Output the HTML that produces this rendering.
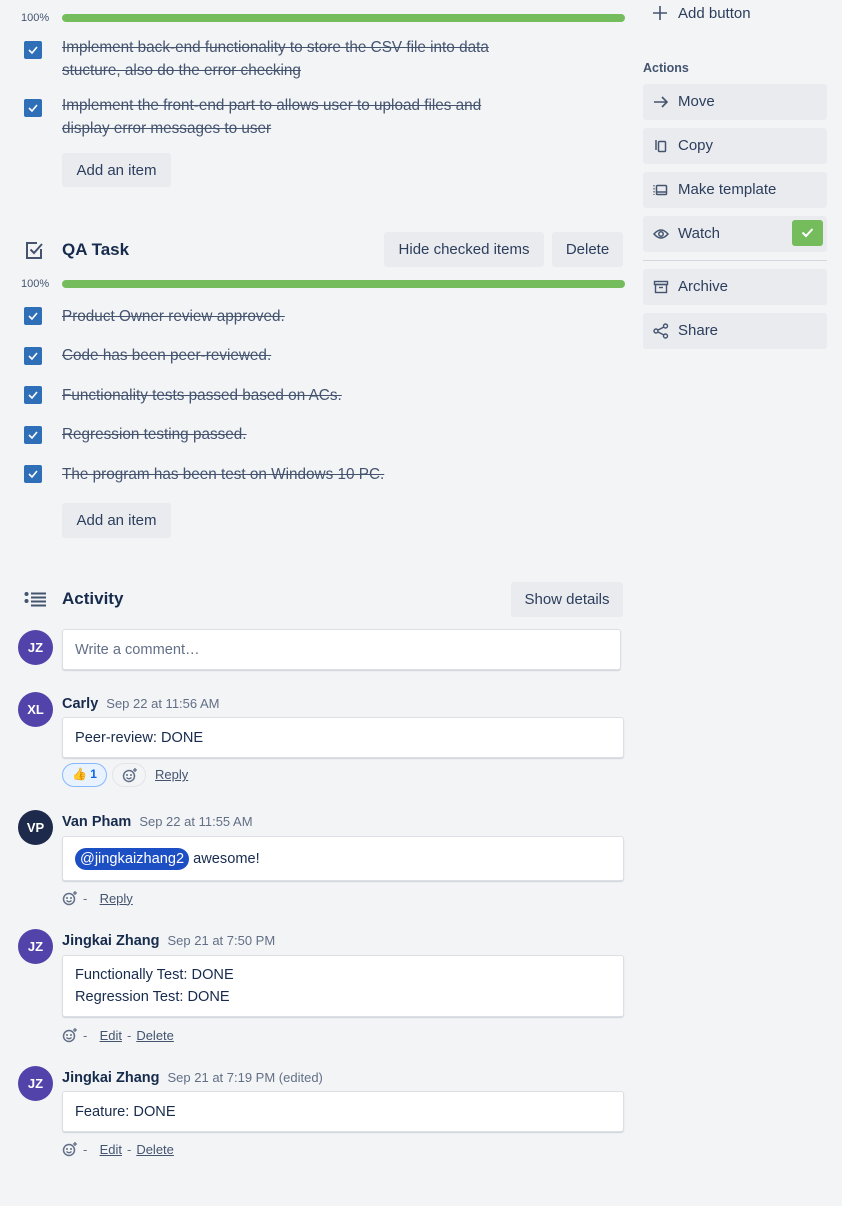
<!DOCTYPE html>
<html><head><meta charset="utf-8"><style>
*{box-sizing:border-box;margin:0;padding:0}
body{width:842px;height:1206px;background:#f3f4f6;font-family:"Liberation Sans",sans-serif;color:#172b4d;position:relative;overflow:hidden;font-size:14px}
.a{position:absolute}
.btn{position:absolute;background:#e9ebee;border-radius:3px;color:#2c3e5d;font-size:15px;display:flex;align-items:center;justify-content:center}
.pct{position:absolute;left:21px;font-size:11px;color:#44546f}
.bar{position:absolute;left:62px;width:563px;height:8px;border-radius:4px;background:#74bc5c}
.cb{position:absolute;left:24px;width:18px;height:18px;background:#2f6fb8;border-radius:2px}
.cb svg{position:absolute;left:4px;top:5px}
.it{position:absolute;left:62px;color:#44546f;text-decoration:line-through;font-size:15.3px;line-height:23px}
.side{position:absolute;left:643px;width:184px;height:36px;background:#e9ebee;border-radius:3px;font-size:15px;color:#2c3e5d;padding-left:35px;line-height:36px}
.side svg{position:absolute;left:10px;top:10px}
.av{position:absolute;left:18px;width:35px;height:35px;border-radius:50%;background:#5243aa;color:#fff;font-weight:bold;font-size:13px;display:flex;align-items:center;justify-content:center}
.nm{position:absolute;left:62px;font-weight:bold;font-size:14.5px}
.nm span{font-weight:normal;font-size:13px;color:#626f86;margin-left:8px}
.box{position:absolute;left:62px;width:562px;background:#fff;border:1px solid #dcdfe4;border-radius:3px;box-shadow:0 1px 1px rgba(9,30,66,.15);padding-left:12px;font-size:14.6px;color:#172b4d;line-height:22px}
.act{position:absolute;left:62px;font-size:13px;color:#626f86;display:flex;align-items:center;gap:5px}
.act u{color:#44546f}
h3{position:absolute;left:62px;font-size:17px;font-weight:bold;color:#172b4d}
</style></head><body>

<div class="btn" style="left:385px;top:-10px;width:158px;height:10px"></div>
<div class="btn" style="left:553px;top:-10px;width:70px;height:10px"></div>

<div class="pct" style="top:12px">100%</div>
<div class="bar" style="top:14px"></div>
<div class="cb" style="top:41px"><svg width="10" height="8" viewBox="0 0 10 8"><path d="M1 4l3 3 5-6" stroke="#fff" stroke-width="1.6" fill="none"/></svg></div>
<div class="it" style="top:36px">Implement back-end functionality to store the CSV file into data<br>stucture, also do the error checking</div>
<div class="cb" style="top:99px"><svg width="10" height="8" viewBox="0 0 10 8"><path d="M1 4l3 3 5-6" stroke="#fff" stroke-width="1.6" fill="none"/></svg></div>
<div class="it" style="top:94px">Implement the front-end part to allows user to upload files and<br>display error messages to user</div>
<div class="btn" style="left:62px;top:153px;width:109px;height:34px">Add an item</div>

<svg class="a" style="left:25px;top:241px" width="19" height="19" viewBox="0 0 19 19"><path d="M16 8v9H2V2h10" stroke="#44546f" stroke-width="2" fill="none"/><path d="M5.5 8.5l3.5 3.5 8-9" stroke="#44546f" stroke-width="2" fill="none"/></svg>
<h3 style="top:240px">QA Task</h3>
<div class="btn" style="left:384px;top:232px;width:160px;height:35px">Hide checked items</div>
<div class="btn" style="left:552px;top:232px;width:71px;height:35px">Delete</div>
<div class="pct" style="top:278px">100%</div>
<div class="bar" style="top:280px"></div>

<div class="cb" style="top:307px"><svg width="10" height="8" viewBox="0 0 10 8"><path d="M1 4l3 3 5-6" stroke="#fff" stroke-width="1.6" fill="none"/></svg></div>
<div class="it" style="top:305px">Product Owner review approved.</div>
<div class="cb" style="top:347px"><svg width="10" height="8" viewBox="0 0 10 8"><path d="M1 4l3 3 5-6" stroke="#fff" stroke-width="1.6" fill="none"/></svg></div>
<div class="it" style="top:344px">Code has been peer-reviewed.</div>
<div class="cb" style="top:386px"><svg width="10" height="8" viewBox="0 0 10 8"><path d="M1 4l3 3 5-6" stroke="#fff" stroke-width="1.6" fill="none"/></svg></div>
<div class="it" style="top:384px">Functionality tests passed based on ACs.</div>
<div class="cb" style="top:426px"><svg width="10" height="8" viewBox="0 0 10 8"><path d="M1 4l3 3 5-6" stroke="#fff" stroke-width="1.6" fill="none"/></svg></div>
<div class="it" style="top:423px">Regression testing passed.</div>
<div class="cb" style="top:465px"><svg width="10" height="8" viewBox="0 0 10 8"><path d="M1 4l3 3 5-6" stroke="#fff" stroke-width="1.6" fill="none"/></svg></div>
<div class="it" style="top:463px">The program has been test on Windows 10 PC.</div>
<div class="btn" style="left:62px;top:503px;width:109px;height:35px">Add an item</div>

<svg class="a" style="left:24px;top:591px" width="23" height="17" viewBox="0 0 23 17"><g fill="#44546f"><circle cx="2.5" cy="3" r="2"/><circle cx="2.5" cy="10" r="2"/><rect x="7" y="1.5" width="15" height="2"/><rect x="7" y="5.5" width="15" height="2"/><rect x="7" y="9.5" width="15" height="2"/><rect x="7" y="13.5" width="15" height="2"/></g></svg>
<h3 style="top:589px">Activity</h3>
<div class="btn" style="left:511px;top:582px;width:112px;height:35px">Show details</div>

<div class="av" style="top:630px">JZ</div>
<div class="box" style="top:629px;width:559px;height:41px;line-height:41px;color:#626f86">Write a comment…</div>

<div class="av" style="top:692px">XL</div>
<div class="nm" style="top:696px">Carly<span>Sep 22 at 11:56 AM</span></div>
<div class="box" style="top:717px;height:41px;line-height:41px">Peer-review: DONE</div>
<div class="a" style="left:62px;top:763px;width:45px;height:24px;border:1px solid #85b8ff;border-radius:12px;background:#e9f2ff;font-size:12px;font-weight:bold;color:#0c66e4;padding:3px 0 0 9px"><span style="color:#f5c542">👍</span> 1</div>
<div class="a" style="left:112px;top:763px;width:34px;height:24px;border:1px solid #e2e4e8;border-radius:12px"><svg style="position:absolute;left:9px;top:3px" width="16" height="16" viewBox="0 0 16 16"><circle cx="7" cy="9" r="5.5" stroke="#626f86" stroke-width="1.5" fill="none"/><circle cx="5" cy="8" r="1" fill="#626f86"/><circle cx="9" cy="8" r="1" fill="#626f86"/><path d="M4.5 10.5q2.5 2.5 5 0" stroke="#626f86" stroke-width="1.3" fill="none"/><path d="M13 1v4M11 3h4" stroke="#626f86" stroke-width="1.3"/></svg></div>
<div class="act" style="left:155px;top:767px"><u>Reply</u></div>

<div class="av" style="top:810px;background:#1d2a4b">VP</div>
<div class="nm" style="top:814px">Van Pham<span>Sep 22 at 11:55 AM</span></div>
<div class="box" style="top:836px;height:45px;line-height:45px"><span style="background:#1d4fc4;color:#fff;border-radius:12px;padding:3px 5px">@jingkaizhang2</span> awesome!</div>
<div class="act" style="top:890px"><svg width="16" height="16" viewBox="0 0 16 16"><circle cx="7" cy="9" r="5.5" stroke="#626f86" stroke-width="1.5" fill="none"/><circle cx="5" cy="8" r="1" fill="#626f86"/><circle cx="9" cy="8" r="1" fill="#626f86"/><path d="M4.5 10.5q2.5 2.5 5 0" stroke="#626f86" stroke-width="1.3" fill="none"/><path d="M13 1v4M11 3h4" stroke="#626f86" stroke-width="1.3"/></svg> - &nbsp;<u>Reply</u></div>

<div class="av" style="top:929px">JZ</div>
<div class="nm" style="top:933px">Jingkai Zhang<span>Sep 21 at 7:50 PM</span></div>
<div class="box" style="top:955px;height:62px;padding-top:8px">Functionally Test: DONE<br>Regression Test: DONE</div>
<div class="act" style="top:1027px"><svg width="16" height="16" viewBox="0 0 16 16"><circle cx="7" cy="9" r="5.5" stroke="#626f86" stroke-width="1.5" fill="none"/><circle cx="5" cy="8" r="1" fill="#626f86"/><circle cx="9" cy="8" r="1" fill="#626f86"/><path d="M4.5 10.5q2.5 2.5 5 0" stroke="#626f86" stroke-width="1.3" fill="none"/><path d="M13 1v4M11 3h4" stroke="#626f86" stroke-width="1.3"/></svg> - &nbsp;<u>Edit</u> - <u>Delete</u></div>

<div class="av" style="top:1066px">JZ</div>
<div class="nm" style="top:1070px">Jingkai Zhang<span>Sep 21 at 7:19 PM (edited)</span></div>
<div class="box" style="top:1091px;height:41px;line-height:41px">Feature: DONE</div>
<div class="act" style="top:1141px"><svg width="16" height="16" viewBox="0 0 16 16"><circle cx="7" cy="9" r="5.5" stroke="#626f86" stroke-width="1.5" fill="none"/><circle cx="5" cy="8" r="1" fill="#626f86"/><circle cx="9" cy="8" r="1" fill="#626f86"/><path d="M4.5 10.5q2.5 2.5 5 0" stroke="#626f86" stroke-width="1.3" fill="none"/><path d="M13 1v4M11 3h4" stroke="#626f86" stroke-width="1.3"/></svg> - &nbsp;<u>Edit</u> - <u>Delete</u></div>

<!-- sidebar -->
<svg class="a" style="left:653px;top:6px" width="14" height="14" viewBox="0 0 14 14"><path d="M7 0v14M0 7h14" stroke="#44546f" stroke-width="1.6"/></svg>
<div class="a" style="left:678px;top:5px;font-size:15px;color:#2c3e5d">Add button</div>
<div class="a" style="left:643px;top:61px;font-size:12.5px;font-weight:bold;color:#44546f">Actions</div>

<div class="side" style="top:84px"><svg width="16" height="16" viewBox="0 0 16 16"><path d="M1 8h13M9 3l5 5-5 5" stroke="#44546f" stroke-width="1.6" fill="none"/></svg>Move</div>
<div class="side" style="top:128px"><svg width="16" height="16" viewBox="0 0 16 16"><path d="M3 2v10" stroke="#44546f" stroke-width="1.5"/><rect x="5.5" y="3.5" width="7" height="10" rx="1" stroke="#44546f" stroke-width="1.5" fill="none"/></svg>Copy</div>
<div class="side" style="top:172px"><svg width="16" height="16" viewBox="0 0 16 16"><rect x="3.5" y="3.5" width="10" height="9" rx="1" stroke="#44546f" stroke-width="1.5" fill="none"/><path d="M3.5 10h10" stroke="#44546f" stroke-width="1.5"/><path d="M1 3v10" stroke="#44546f" stroke-width="1.2" stroke-dasharray="1.5 1.5"/></svg>Make template</div>
<div class="side" style="top:216px"><svg width="16" height="16" viewBox="0 0 16 16"><path d="M1 8q7-8 14 0q-7 8-14 0z" stroke="#44546f" stroke-width="1.5" fill="none"/><circle cx="8" cy="8" r="2.2" stroke="#44546f" stroke-width="1.5" fill="none"/></svg>Watch
<div style="position:absolute;left:149px;top:4px;width:31px;height:26px;background:#74bc5c;border-radius:3px"><svg style="position:absolute;left:9px;top:7px" width="13" height="11" viewBox="0 0 13 11"><path d="M1.5 5.5l3.5 3.5 6.5-7" stroke="#fff" stroke-width="2" fill="none"/></svg></div></div>
<div class="a" style="left:643px;top:260px;width:184px;height:1px;background:#d5d8de"></div>
<div class="side" style="top:269px"><svg width="16" height="16" viewBox="0 0 16 16"><rect x="1.5" y="2.5" width="13" height="3" stroke="#44546f" stroke-width="1.4" fill="none"/><rect x="2.5" y="5.5" width="11" height="8" stroke="#44546f" stroke-width="1.4" fill="none"/><path d="M6 8.5h4" stroke="#44546f" stroke-width="1.4"/></svg>Archive</div>
<div class="side" style="top:313px"><svg width="16" height="16" viewBox="0 0 16 16"><circle cx="3" cy="8" r="2" stroke="#44546f" stroke-width="1.4" fill="none"/><circle cx="12.5" cy="3" r="2" stroke="#44546f" stroke-width="1.4" fill="none"/><circle cx="12.5" cy="13" r="2" stroke="#44546f" stroke-width="1.4" fill="none"/><path d="M5 7l6-3M5 9l6 3" stroke="#44546f" stroke-width="1.4"/></svg>Share</div>
</body></html>
